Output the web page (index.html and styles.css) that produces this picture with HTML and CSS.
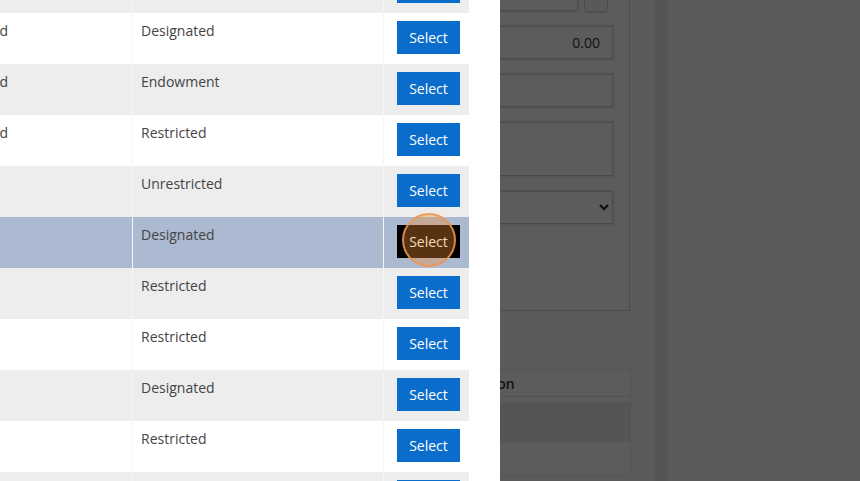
FILE: index.html
```html
<!DOCTYPE html>
<html lang="en">
<head>
<meta charset="utf-8">
<title>Select Fund</title>
<link rel="stylesheet" href="styles.css">
</head>
<body>
  <div class="page">
    <div class="main">
      <section class="panel">
        <div class="field-row">
          <div class="input range-input"></div>
          <button class="step-btn" type="button"></button>
        </div>
        <input class="input amount" type="text" value="0.00">
        <input class="input" type="text">
        <textarea class="input textarea"></textarea>
        <div class="input select-box">
          <svg class="chevron" width="10" height="7" viewBox="0 0 10 7"><polyline points="1,1 5,5 9,1" fill="none" stroke="#333" stroke-width="2.4"/></svg>
        </div>
      </section>
      <table class="lines">
        <thead>
          <tr><th class="acct">Account</th><th class="desc">Description</th></tr>
        </thead>
        <tbody>
          <tr class="shade"><td></td><td></td></tr>
          <tr><td></td><td></td></tr>
        </tbody>
      </table>
    </div>
    <div class="gutter"></div>
    <div class="strip"></div>
    <div class="rest"></div>
  </div>

  <div class="backdrop"></div>

  <div class="modal">
    <table class="fund-table">
      <tbody>
        <tr><td class="c-name">Annual</td><td class="c-type">Restricted</td><td class="c-act"><button class="select-btn" type="button">Select</button></td></tr>
        <tr><td class="c-name">General Fund</td><td class="c-type">Designated</td><td class="c-act"><button class="select-btn" type="button">Select</button></td></tr>
        <tr><td class="c-name">General Fund</td><td class="c-type">Endowment</td><td class="c-act"><button class="select-btn" type="button">Select</button></td></tr>
        <tr><td class="c-name">General Fund</td><td class="c-type">Restricted</td><td class="c-act"><button class="select-btn" type="button">Select</button></td></tr>
        <tr><td class="c-name">Gifts</td><td class="c-type">Unrestricted</td><td class="c-act"><button class="select-btn" type="button">Select</button></td></tr>
        <tr class="is-selected"><td class="c-name">Reserve</td><td class="c-type">Designated</td><td class="c-act"><button class="select-btn active" type="button">Select</button></td></tr>
        <tr><td class="c-name">Grants</td><td class="c-type">Restricted</td><td class="c-act"><button class="select-btn" type="button">Select</button></td></tr>
        <tr><td class="c-name">Library</td><td class="c-type">Restricted</td><td class="c-act"><button class="select-btn" type="button">Select</button></td></tr>
        <tr><td class="c-name">Capital</td><td class="c-type">Designated</td><td class="c-act"><button class="select-btn" type="button">Select</button></td></tr>
        <tr><td class="c-name">Scholar</td><td class="c-type">Restricted</td><td class="c-act"><button class="select-btn" type="button">Select</button></td></tr>
        <tr><td class="c-name">Events</td><td class="c-type">Restricted</td><td class="c-act"><button class="select-btn" type="button">Select</button></td></tr>
      </tbody>
    </table>
  </div>

  <div class="click-ring"></div>
</body>
</html>
```
FILE: styles.css
```css
* { box-sizing: border-box; }

body {
  margin: 0;
  width: 860px;
  height: 481px;
  overflow: hidden;
  position: relative;
  font-family: "Open Sans", "Liberation Sans", sans-serif;
  font-size: 14px;
  color: #333;
}

/* ---------- underlying page ---------- */
.page {
  display: flex;
  height: 481px;
  background: #fafafa;
}

.main {
  width: 631px;
  flex: none;
  background: #fdfdfd;
}

.panel {
  margin-top: -25px;
  margin-left: 280px;
  width: 350px;
  background: #fff;
  border-right: 1px solid #cfcfcf;
  border-bottom: 1px solid #d6d6d6;
  padding: 0 16px 86px 20px;
  display: flex;
  flex-direction: column;
  gap: 15px;
}

.field-row {
  display: flex;
  height: 36px;
  align-items: flex-end;
}

.input {
  display: block;
  width: 100%;
  height: 33px;
  border: 1px solid #cdcdcd;
  box-shadow: 0 0 0 2px #f1f1f1;
  background: #fff;
  font-family: inherit;
  font-size: 14px;
  color: #333;
  padding: 0 12px;
  margin: 0;
}

.range-input {
  flex: 1;
  height: 30px;
}

.step-btn {
  width: 24px;
  height: 28px;
  margin: 0 5px -1px 6px;
  border: 1px solid #cfcfcf;
  border-radius: 4px;
  background: #f7f7f7;
  box-shadow: 0 1px 2px #ddd;
  padding: 0;
}

.amount { text-align: right; }

.textarea {
  height: 54px;
  resize: none;
}

.select-box {
  display: flex;
  align-items: center;
  justify-content: flex-end;
  padding-right: 3px;
}

.lines {
  margin-top: 58px;
  margin-left: 280px;
  width: 351px;
  border-collapse: separate;
  border-spacing: 0;
  background: #fff;
  border-right: 1px solid #e2e2e2;
}

.lines th {
  height: 28px;
  text-align: left;
  font-weight: 600;
  color: #333;
  border-top: 1px solid #e6e6e6;
  border-bottom: 1px solid #e6e6e6;
  padding: 0 0 0 8px;
  font-size: 14px;
}

.lines th.acct { width: 149px; }

.lines tbody td {
  height: 34px;
  border-bottom: 1px solid #ececec;
}

.lines tbody tr.shade td {
  height: 45px;
  border-top: 5px solid #fff;
  background: #ebebeb;
}

.gutter {
  width: 24px;
  flex: none;
  background: #fdfdfd;
}

.strip {
  width: 13px;
  flex: none;
  background: #ececec;
}

.rest {
  flex: 1;
  background: #fafafa;
}

/* ---------- overlay ---------- */
.backdrop {
  position: absolute;
  inset: 0;
  background: rgba(0, 0, 0, 0.64);
  z-index: 1;
}

/* ---------- modal ---------- */
.modal {
  position: absolute;
  left: 0;
  top: 0;
  width: 500px;
  height: 481px;
  background: #fff;
  overflow: hidden;
  z-index: 2;
}

.fund-table {
  margin-top: -38px;
  margin-left: -88px;
  border-collapse: separate;
  border-spacing: 0;
  table-layout: fixed;
  width: 557px;
}

.fund-table td {
  height: 51px;
  padding: 8px 0 0 8px;
  vertical-align: top;
  line-height: 20px;
  white-space: nowrap;
  overflow: hidden;
  color: #444;
}

.fund-table tr:nth-child(odd) td { background: #ededed; }
.fund-table tr:nth-child(even) td { background: #fff; }
.fund-table tr.is-selected td { background: #abb9d1; }

.c-name { width: 220px; }

.c-type {
  width: 251px;
  border-left: 1px solid #f5f5f5;
}

.c-act {
  width: 86px;
  border-left: 1px solid #f5f5f5;
  padding-left: 13px !important;
}

.select-btn {
  display: block;
  width: 63px;
  height: 33px;
  border: 0;
  padding: 0;
  background: #0a6dcb;
  color: #fff;
  font-family: inherit;
  font-size: 14px;
  line-height: 33px;
  text-align: center;
}

.select-btn.active { background: #000; }

/* click annotation */
.click-ring {
  position: absolute;
  left: 402px;
  top: 213px;
  width: 54px;
  height: 54px;
  border-radius: 50%;
  border: 2px solid rgba(238, 150, 80, 0.85);
  background: rgba(240, 140, 50, 0.36);
  z-index: 3;
}
```
